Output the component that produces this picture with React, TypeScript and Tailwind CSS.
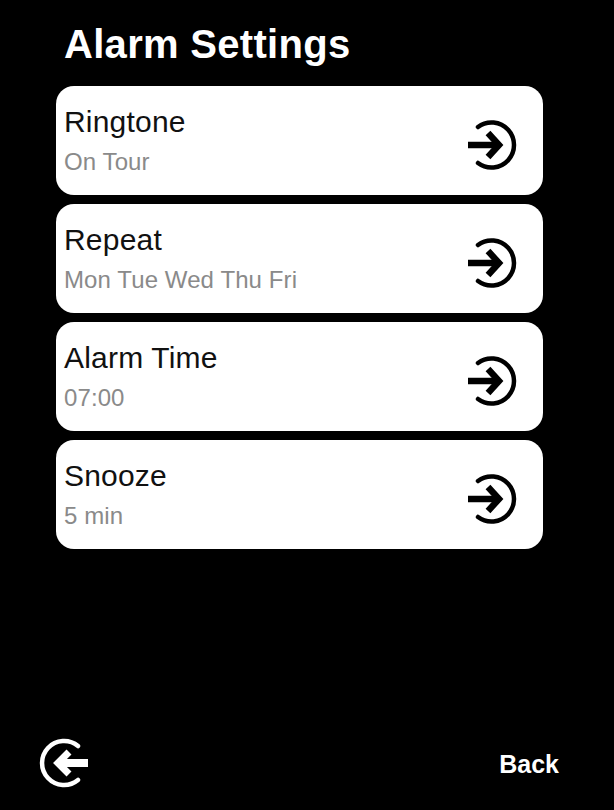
const ITEMS = [
  { title: "Ringtone", value: "On Tour" },
  { title: "Repeat", value: "Mon Tue Wed Thu Fri" },
  { title: "Alarm Time", value: "07:00" },
  { title: "Snooze", value: "5 min" },
];

function EnterIcon() {
  return (
    <svg className="w-[56px] h-[56px] shrink-0 mt-[9px]" viewBox="0 0 56 56" fill="none" stroke="#000">
      <path d="M14 10 A 22.5 22.5 0 1 1 14 46" strokeWidth="4.5" strokeLinecap="round" />
      <path d="M4 28 H31" strokeWidth="6.5" />
      <path d="M24 16 L35 28 L24 40" strokeWidth="6.5" />
    </svg>
  );
}

function ExitIcon() {
  return (
    <svg className="w-[56px] h-[56px] shrink-0" viewBox="0 0 56 56" fill="none" stroke="#fff">
      <path d="M46 11 A 22 22 0 1 0 46 45" strokeWidth="4.5" strokeLinecap="round" />
      <path d="M30 28 H56" strokeWidth="8" />
      <path d="M37 17 L26 28 L37 39" strokeWidth="7" />
    </svg>
  );
}

export default function App() {
  return (
    <div className="w-[614px] h-[810px] bg-black flex flex-col font-['Liberation_Sans',Arial,sans-serif] overflow-hidden">
      <h1 className="pl-[64px] pt-[21px] h-[86px] text-[40px] leading-[46px] font-bold tracking-[0.3px] whitespace-pre text-white">Alarm Settings</h1>

      <div className="flex flex-col gap-[9px] ml-[56px] w-[487px]">
        {ITEMS.map((item) => (
          <div key={item.title} className="h-[109px] bg-white rounded-[18px] flex items-center justify-between pl-[8px] pr-[23px]">
            <div className="flex flex-col">
              <span className="text-[30px] leading-[34px] tracking-[0.2px] text-[#111]">{item.title}</span>
              <span className="mt-[9px] text-[24px] leading-[28px] tracking-[0.1px] text-[#8a8a8a]">{item.value}</span>
            </div>
            <EnterIcon />
          </div>
        ))}
      </div>

      <div className="mt-auto h-[78px] pb-[16px] pl-[32px] pr-[55px] flex items-center justify-between">
        <ExitIcon />
        <span className="mt-[4px] text-[25px] font-bold text-white">Back</span>
      </div>
    </div>
  );
}
